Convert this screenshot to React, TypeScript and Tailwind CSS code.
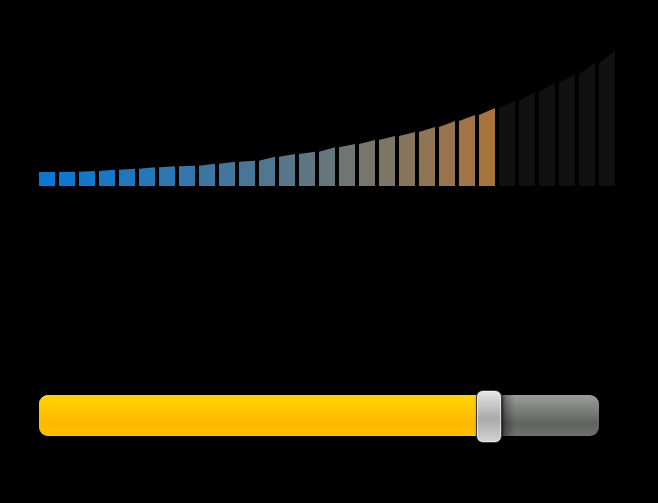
import React from 'react';

// bar heights measured at the left edge of each bar, plus the end point
const heights = [
  14, 14, 14.3, 15, 16.3, 17.3, 18.7, 19.7, 20.3, 22.3, 24.3, 25.3, 29.3, 32, 34.3,
  38.7, 42, 46, 50, 54, 59, 65, 71, 78, 85, 94, 103, 112, 123, 135,
];

const LIT = 23; // bars that are lit
const CHART_H = 135;

function barColor(i: number) {
  const from = [8, 120, 212];
  const to = [168, 116, 62];
  const t = Math.pow(i / (LIT - 1), 1.15);
  const c = from.map((f, k) => Math.round(f + (to[k] - f) * t));
  return `rgb(${c[0]},${c[1]},${c[2]})`;
}

function LevelBars() {
  const count = heights.length - 1;
  return (
    <svg width={576} height={CHART_H} viewBox={`0 0 576 ${CHART_H}`}>
      {Array.from({ length: count }).map((_, i) => {
        const x = i * 20;
        const hl = heights[i];
        const hr = heights[i + 1];
        const pts = `${x},${CHART_H} ${x},${CHART_H - hl} ${x + 16},${CHART_H - hr} ${x + 16},${CHART_H}`;
        return <polygon key={i} points={pts} fill={i < LIT ? barColor(i) : '#111111'} />;
      })}
    </svg>
  );
}

function VolumeSlider({ value }: { value: number }) {
  const fillPct = value * 100;
  return (
    <div className="relative w-[560px] h-[41px]">
      <div className="absolute inset-0 rounded-[9px] overflow-hidden bg-gradient-to-b from-[#9c9d9c] via-[#606360] via-70% to-[#6f716f]">
        <div
          className="h-full bg-gradient-to-b from-[#ffd500] via-[#ffb800] via-70% to-[#ffc000]"
          style={{ width: `${fillPct}%` }}
        />
      </div>
      {/* shadow cast by thumb on the track */}
      <div
        className="absolute top-0 h-full w-[14px] bg-gradient-to-r from-black/40 to-transparent"
        style={{ left: `calc(${fillPct}% + 12px)` }}
      />
      <div
        className="absolute top-[-5px] h-[53px] w-[26px] -translate-x-1/2 rounded-[7px] border border-[#3a3a3a] bg-gradient-to-b from-[#e6e6e6] via-[#a9a9a9] via-55% to-[#d4d4d4] shadow-[inset_0_0_0_1px_rgba(255,255,255,0.55),1px_0_3px_rgba(0,0,0,0.6)]"
        style={{ left: `${fillPct}%` }}
      />
    </div>
  );
}

export default function App() {
  return (
    <div className="w-[658px] h-[503px] bg-black overflow-hidden pl-[39px] pt-[51px]">
      <LevelBars />
      <div className="mt-[209px]">
        <VolumeSlider value={0.804} />
      </div>
    </div>
  );
}
